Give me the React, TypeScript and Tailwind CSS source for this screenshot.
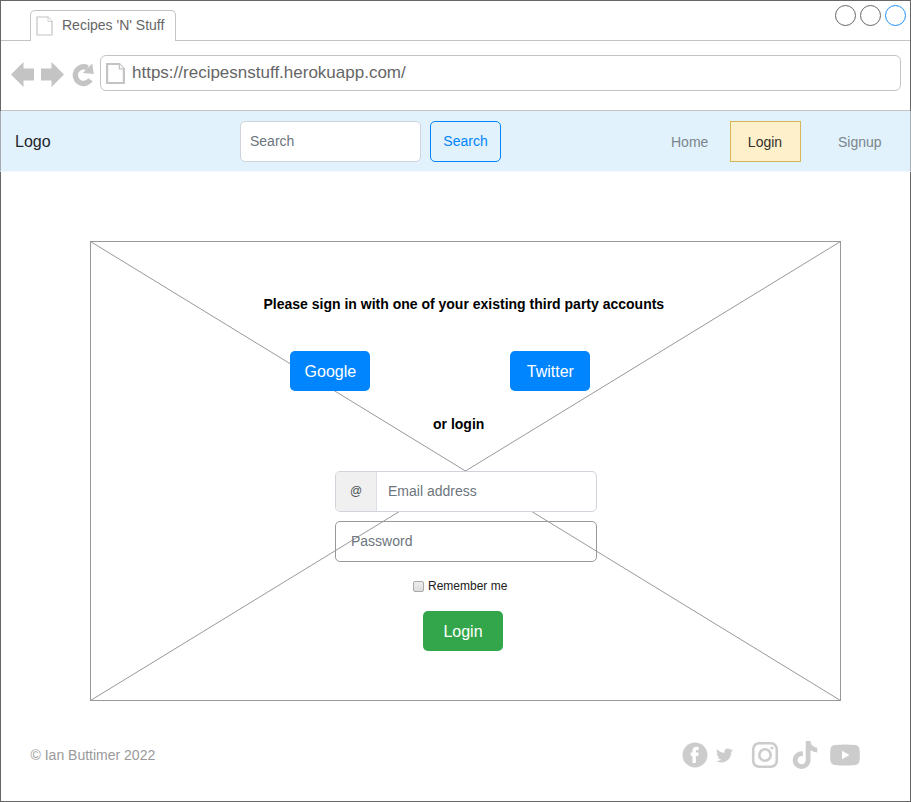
import React from "react";
import { FaTiktok, FaTwitter } from "react-icons/fa";

function PageIcon({ className, stroke }: { className: string; stroke: number }) {
  return (
    <svg className={className} viewBox="0 0 17 20" preserveAspectRatio="none" fill="#fff" stroke="#c4c4c4" strokeWidth={stroke}>
      <path d="M1 1h11l4 4.5V19H1z" />
      <path d="M12 1v4.5h4" strokeWidth={stroke * 0.6} />
    </svg>
  );
}

function TabStrip() {
  return (
    <div className="flex h-10 shrink-0 items-end justify-between">
      <div className="h-10 w-[29px] shrink-0 border-b border-[#c4c4c4]" />
      <div className="flex h-[31px] w-[146px] shrink-0 items-center rounded-t-[5px] border border-b-0 border-[#c4c4c4] pl-[5px]">
        <PageIcon className="h-5 w-[17px]" stroke={1.2} />
        <span className="-mt-[3px] ml-[9px] text-[14px] leading-4 whitespace-nowrap text-[#666]">Recipes 'N' Stuff</span>
      </div>
      <div className="flex h-10 grow items-start justify-end gap-1 border-b border-[#c4c4c4] pt-1 pr-1">
        <div className="size-[21px] rounded-full border border-[#666]" />
        <div className="size-[21px] rounded-full border border-[#666]" />
        <div className="size-[21px] rounded-full border border-[#1e90ff]" />
      </div>
    </div>
  );
}

function AddressBar() {
  return (
    <div className="flex h-[70px] shrink-0 items-start border-b border-[#c4c4c4] pt-[14px] pr-[9px] pl-[10px]">
      <svg className="mt-[7px] h-[26px] w-[86px] shrink-0" viewBox="11 62 86 26" fill="#c4c4c4">
        <path d="M11 74.500 23.500 62v6.500H34v12H23.500V87z" />
        <path d="M64 74.500 51.500 62v6.500H41v12h10.500V87z" />
        <path d="M90.500 79.800A8.300 8.300 0 1 1 87.500 67.800" fill="none" stroke="#c4c4c4" strokeWidth="5.400" />
        <path d="M82.800 73 92.200 63.600 93.800 74z" />
      </svg>
      <div className="ml-[3px] flex h-9 grow items-center rounded-[6px] border border-[#c4c4c4] pl-[4.5px]">
        <PageIcon className="h-[21px] w-[19px]" stroke={2} />
        <span className="-mt-px ml-[7.5px] text-[17px] leading-5 text-[#666]">https://recipesnstuff.herokuapp.com/</span>
      </div>
    </div>
  );
}

function Navbar() {
  return (
    <nav className="-mx-px flex h-[61px] shrink-0 items-start border-x border-b border-x-[#a5acb2] border-b-[#f0f8fe] bg-[#e1f2fd] pt-[10px] text-[14px]">
      <span className="mt-[11px] w-[239px] pl-[14px] text-[16px] leading-5 text-[#212529]">Logo</span>
      <div className="flex h-[41px] w-[181px] items-center rounded-[5px] border border-[#ced4da] bg-white pl-[9px] text-[#6c757d]">Search</div>
      <div className="ml-[9px] flex h-[41px] w-[71px] items-center justify-center rounded-[5px] border border-[#0085fc] text-[#0085fc]">Search</div>
      <span className="mt-[11px] ml-[170px] w-[59px] leading-5 text-[#7b858b]">Home</span>
      <div className="flex h-[41px] w-[71px] items-center justify-center border border-[#d6b656] bg-[#fff0cc] pt-px pr-px text-[#33302a]">Login</div>
      <span className="mt-[11px] ml-[37px] leading-5 text-[#7b858b]">Signup</span>
    </nav>
  );
}

function SolidButton({ label, green = false }: { label: string; green?: boolean }) {
  return (
    <div className={`flex h-10 w-20 items-center justify-center rounded-[5px] pt-0.5 text-[16px] leading-6 text-white ${green ? "bg-[#33a64c]" : "bg-[#0085ff]"}`}>
      {label}
    </div>
  );
}

function LoginPanel() {
  return (
    <main className="relative mt-[69px] ml-[89px] h-[460px] w-[751px] shrink-0 border border-[#999]">
      <svg className="absolute -top-px -left-px h-[460px] w-[751px]" viewBox="0 0 751 460" stroke="#999" strokeWidth="1">
        <path d="M.5.5 750.500 459.500M750.500.5.5 459.500" />
      </svg>
      <div className="relative flex flex-col">
        <h1 className="mt-[52px] ml-[172.5px] text-[14px] leading-5 font-bold text-black">
          Please sign in with one of your existing third party accounts
        </h1>
        <div className="mt-[37.4px] ml-[199.400px] flex gap-[140px]">
          <SolidButton label="Google" />
          <SolidButton label="Twitter" />
        </div>
        <p className="mt-[22.600px] ml-[342px] text-[14px] leading-5 font-bold text-black">or login</p>
        <div className="mt-[37px] ml-[244px] flex h-[41px] w-[262px] overflow-hidden rounded-[5px] border border-[#ced4da] bg-white text-[14px]">
          <span className="flex w-[41px] items-center justify-center border-r border-[#dbe1e7] bg-[#f0f0f0] text-[12px] text-[#495057]">@</span>
          <span className="flex items-center pl-[11px] text-[#6c757d]">Email address</span>
        </div>
        <div className="mt-[9px] ml-[244px] flex h-[41px] w-[262px] items-center rounded-[5px] border border-[#999] pl-[15px] text-[14px] text-[#6c757d]">
          Password
        </div>
        <div className="mt-[16px] ml-[321.5px] flex h-4 items-center gap-[4.5px]">
          <span className="mt-px size-[11px] rounded-[2px] border border-[#aaa] bg-linear-to-b from-[#eee] to-[#ddd]" />
          <span className="text-[12px] leading-4 text-[#212121]">Remember me</span>
        </div>
        <div className="mt-[17.400px] ml-[332px]">
          <SolidButton label="Login" green />
        </div>
      </div>
    </main>
  );
}

function Footer() {
  return (
    <footer className="mt-10 flex h-[28px] shrink-0 items-center pl-[29.5px] text-[#ccc]">
      <span className="w-[651px] text-[14px] leading-5 text-[#999]">© Ian Buttimer 2022</span>
      <svg className="size-[26px] shrink-0" viewBox="0 0 26 26">
        <circle cx="13" cy="13" r="12.500" fill="#ccc" />
        <path d="M10.500 21v-7H8.700v-3.400h1.800V9c0-2.900 1.500-4.200 4.100-4.200.9 0 1.600.1 2.100.2v3h-1.400c-1.100 0-1.400.5-1.400 1.300v1.300h2.700l-.4 3.400h-2.300v7z" fill="#fff" />
      </svg>
      <FaTwitter className="ml-[8px] size-[17px] shrink-0" />
      <svg className="ml-[18px] size-[28px] shrink-0" viewBox="0 0 28 28" fill="none" stroke="#ccc">
        <rect x="2.200" y="2.200" width="23.600" height="23.600" rx="6" strokeWidth="2.600" />
        <circle cx="14" cy="14" r="5.700" strokeWidth="2.600" />
        <circle cx="21" cy="7" r="1.600" fill="#ccc" stroke="none" />
      </svg>
      <FaTiktok className="ml-[12.5px] h-[28px] w-[28px] shrink-0" />
      <svg className="ml-[10.5px] h-[22px] w-[30px] shrink-0" viewBox="0 0 30 22">
        <path d="M5 1Q15 0 25 1 29 1.300 29.500 5 30.200 11 29.500 17 29 20.700 25 21 15 22 5 21 1 20.700.5 17-.2 11 .5 5 1 1.300 5 1z" fill="#ccc" />
        <path d="M12 6.800v8.400L19.500 11z" fill="#fff" />
      </svg>
    </footer>
  );
}

export default function App() {
  return (
    <div className="flex h-[802px] w-[911px] flex-col border border-[#666] bg-white font-['Liberation_Sans',Arial,sans-serif]">
      <TabStrip />
      <AddressBar />
      <Navbar />
      <LoginPanel />
      <Footer />
    </div>
  );
}
